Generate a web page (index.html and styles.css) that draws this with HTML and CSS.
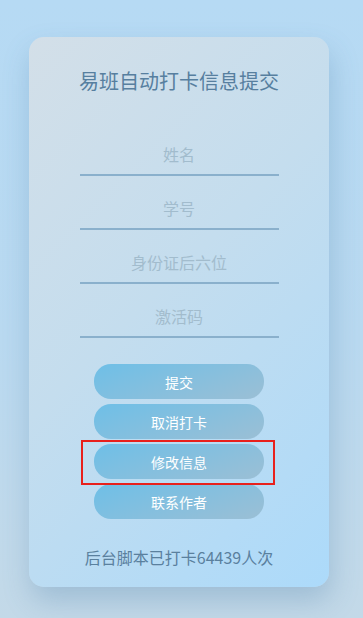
FILE: index.html
```html
<!DOCTYPE html>
<html lang="zh-CN">
<head>
<meta charset="utf-8">
<title>易班自动打卡信息提交</title>
<link rel="stylesheet" href="styles.css">
</head>
<body>
<div class="page">
  <div class="card">
    <h1 class="title">易班自动打卡信息提交</h1>
    <div class="form">
      <div class="field"><input class="input" type="text" placeholder="姓名"></div>
      <div class="field"><input class="input" type="text" placeholder="学号"></div>
      <div class="field"><input class="input" type="text" placeholder="身份证后六位"></div>
      <div class="field"><input class="input" type="text" placeholder="激活码"></div>
    </div>
    <div class="buttons">
      <button class="btn">提交</button>
      <button class="btn">取消打卡</button>
      <div class="btn-wrap">
        <button class="btn">修改信息</button>
        <span class="highlight"></span>
      </div>
      <button class="btn">联系作者</button>
    </div>
    <p class="footer">后台脚本已打卡64439人次</p>
  </div>
</div>
</body>
</html>
```
FILE: styles.css
```css
* { box-sizing: border-box; }
html, body {
  margin: 0;
  padding: 0;
  width: 363px;
  height: 618px;
  overflow: hidden;
}
body {
  font-family: "Noto Sans CJK SC", "Noto Sans", sans-serif;
  background: linear-gradient(180deg, #b6daf4 0%, #b9d9f0 55%, #c3d9e8 100%);
}
.page {
  padding-top: 37px;
  padding-left: 29px;
  display: flex;
  justify-content: flex-start;
}
.card {
  width: 300px;
  height: 550px;
  border-radius: 15px;
  background: linear-gradient(135deg, #d3dfe8 0%, #c4ddee 45%, #acdafa 100%);
  box-shadow: 2px 14px 28px rgba(70, 120, 160, 0.28);
  padding-top: 32px;
  display: flex;
  flex-direction: column;
  align-items: center;
}
.title {
  margin: 0;
  font-size: 20px;
  line-height: 24px;
  font-weight: normal;
  color: #577f9f;
  letter-spacing: 0;
}
.form {
  margin-top: 29px;
  width: 199px;
  display: flex;
  flex-direction: column;
}
.field {
  margin-top: 12px;
}
.input {
  display: block;
  width: 100%;
  height: 42px;
  border: none;
  border-bottom: 2px solid #8ab0cc;
  background: transparent;
  outline: none;
  text-align: center;
  font-family: "Noto Sans CJK SC", "Noto Sans", sans-serif;
  font-size: 16px;
  color: #577f9f;
  padding: 0;
}
.input::placeholder {
  color: #a2bccd;
}
.buttons {
  margin-top: 26px;
  display: flex;
  flex-direction: column;
  gap: 5px;
  width: 170px;
}
.btn-wrap {
  position: relative;
}
.btn {
  display: block;
  width: 170px;
  height: 35px;
  border: none;
  border-radius: 17px;
  background: linear-gradient(160deg, #6ebfe7 0%, #85bfde 50%, #9bbfd5 100%);
  color: #ffffff;
  font-family: "Noto Sans CJK SC", "Noto Sans", sans-serif;
  font-size: 14px;
  padding: 0;
}
.highlight {
  position: absolute;
  left: -13px;
  top: -4px;
  width: 194px;
  height: 45px;
  border: 2px solid #e8201c;
  pointer-events: none;
}
.footer {
  margin: 28px 0 0;
  font-size: 16px;
  line-height: 20px;
  color: #5a809e;
}
```
